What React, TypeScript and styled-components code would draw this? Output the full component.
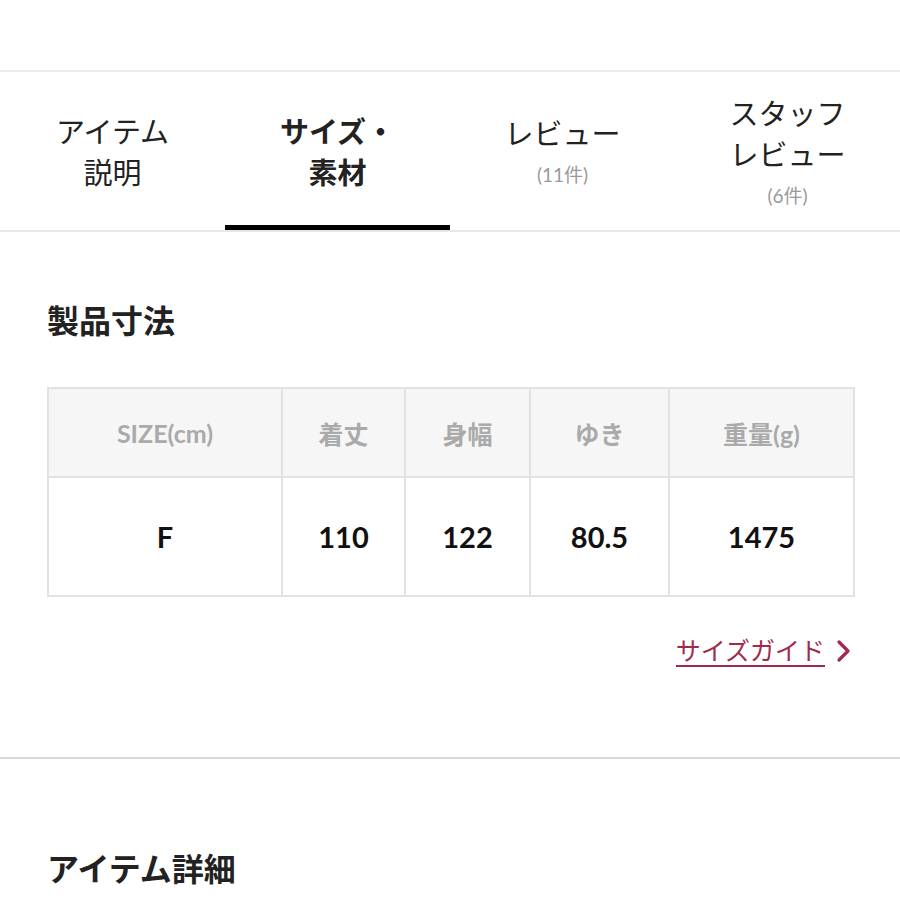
import React from "react";
import styled, { createGlobalStyle } from "styled-components";

const GlobalStyle = createGlobalStyle`
  body {
    margin: 0;
    background: #fff;
    color: #222;
    font-family: "Lato", "Noto Sans CJK JP", sans-serif;
  }
`;

const Page = styled.div`
  width: 900px;
  padding-top: 70px;
`;

const TabBar = styled.nav`
  display: grid;
  grid-template-columns: repeat(4, 1fr);
  height: 162px;
  border-top: 2px solid #ebebeb;
  border-bottom: 2px solid #e8e8e8;
  box-sizing: border-box;
`;

const Tab = styled.div<{ $active?: boolean }>`
  display: flex;
  flex-direction: column;
  align-items: center;
  justify-content: center;
  box-sizing: border-box;
  border-bottom: 5px solid ${(p) => (p.$active ? "#000" : "transparent")};
  padding-top: 5px;
  font-family: "Noto Sans CJK JP", sans-serif;
  font-size: 29px;
  line-height: 41px;
  font-weight: ${(p) => (p.$active ? 700 : 400)};
  color: #222;
  text-align: center;
`;

const TabCount = styled.span`
  font-family: "Lato", "Noto Sans CJK JP", sans-serif;
  font-size: 19px;
  line-height: 30px;
  color: #999;
  margin-top: 7px;
`;

const Section = styled.section<{ $top: number }>`
  padding: ${(p) => p.$top}px 47px 0;
`;

const Heading = styled.h2`
  margin: 0;
  font-family: "Noto Sans CJK JP", sans-serif;
  font-size: 32px;
  line-height: 40px;
  font-weight: 700;
  color: #222;
`;

const SizeTable = styled.table`
  margin-top: 48px;
  width: 806px;
  border-collapse: collapse;
  table-layout: fixed;
`;

const HeadCell = styled.th`
  height: 87px;
  background: #f6f6f6;
  border: 2px solid #e2e2e2;
  font-family: "Lato", "Noto Sans CJK JP", sans-serif;
  font-size: 25px;
  font-weight: 700;
  color: #aaa;
  text-align: center;
  padding: 0;
`;

const BodyCell = styled.td`
  height: 117px;
  border: 2px solid #e2e2e2;
  font-family: "Lato", sans-serif;
  font-size: 29px;
  font-weight: 700;
  color: #111;
  text-align: center;
  padding: 0;
`;

const GuideRow = styled.div`
  display: flex;
  justify-content: flex-end;
  margin-top: 37px;
  padding-bottom: 90px;
`;

const GuideLink = styled.a`
  display: flex;
  align-items: center;
  gap: 10px;
  color: #a02a4d;
  text-decoration: none;
  font-family: "Noto Sans CJK JP", sans-serif;
  font-size: 25px;
  line-height: 30px;
`;

const GuideText = styled.span`
  border-bottom: 2px solid #a02a4d;
  padding-bottom: 1px;
`;

const Divider = styled.hr`
  margin: 0;
  border: 0;
  border-top: 2px solid #d9d9d9;
`;

const columns = [
  { label: "SIZE(cm)", width: 234, value: "F" },
  { label: "着丈", width: 123, value: "110" },
  { label: "身幅", width: 125, value: "122" },
  { label: "ゆき", width: 139, value: "80.5" },
  { label: "重量(g)", width: 185, value: "1475" },
];

export default function App() {
  return (
    <Page>
      <GlobalStyle />
      <TabBar>
        <Tab>
          <span>アイテム</span>
          <span>説明</span>
        </Tab>
        <Tab $active>
          <span>サイズ・</span>
          <span>素材</span>
        </Tab>
        <Tab>
          <span>レビュー</span>
          <TabCount>(11件)</TabCount>
        </Tab>
        <Tab>
          <span>スタッフ</span>
          <span>レビュー</span>
          <TabCount>(6件)</TabCount>
        </Tab>
      </TabBar>

      <Section $top={67}>
        <Heading>製品寸法</Heading>
        <SizeTable>
          <colgroup>
            {columns.map((c) => (
              <col key={c.label} style={{ width: c.width }} />
            ))}
          </colgroup>
          <thead>
            <tr>
              {columns.map((c) => (
                <HeadCell key={c.label}>{c.label}</HeadCell>
              ))}
            </tr>
          </thead>
          <tbody>
            <tr>
              {columns.map((c) => (
                <BodyCell key={c.label}>{c.value}</BodyCell>
              ))}
            </tr>
          </tbody>
        </SizeTable>
        <GuideRow>
          <GuideLink href="#">
            <GuideText>サイズガイド</GuideText>
            <svg width="18" height="24" viewBox="0 0 18 24">
              <path
                d="M4 3 L13 12 L4 21"
                fill="none"
                stroke="#a02a4d"
                strokeWidth="3.2"
                strokeLinecap="round"
                strokeLinejoin="round"
              />
            </svg>
          </GuideLink>
        </GuideRow>
      </Section>

      <Divider />

      <Section $top={88}>
        <Heading>アイテム詳細</Heading>
      </Section>
    </Page>
  );
}
